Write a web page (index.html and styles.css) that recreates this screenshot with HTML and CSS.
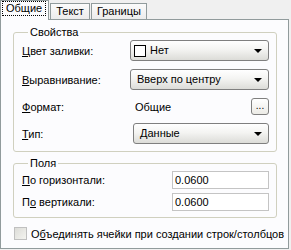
FILE: index.html
```html
<html>
  <head>
    <title>Свойства ячейки</title>
    <link rel="stylesheet" href="styles.css">
  </head>
  <body>
    <div class="tabs">
      <div class="tab active"><span class="focus">Общие</span></div>
      <div class="tab">Текст</div>
      <div class="tab">Границы</div>
    </div>

    <div class="page">
      <fieldset class="group props">
        <legend>Свойства</legend>
        <div class="rows">
          <label><u>Ц</u>вет заливки:</label>
          <div class="combo"><span class="swatch"></span>Нет<span class="arrow"></span></div>

          <label><u>В</u>ыравнивание:</label>
          <div class="combo">Вверх по центру<span class="arrow"></span></div>

          <label><u>Ф</u>ормат:</label>
          <div class="format"><span class="value">Общие</span><span class="btn">...</span></div>

          <label><u>Т</u>ип:</label>
          <div class="combo shifted">Данные<span class="arrow"></span></div>
        </div>
      </fieldset>

      <fieldset class="group fields">
        <legend>Поля</legend>
        <div class="rows">
          <label><u>П</u>о горизонтали:</label>
          <div class="edit">0.0600</div>
          <label>П<u>о</u> вертикали:</label>
          <div class="edit">0.0600</div>
        </div>
      </fieldset>

      <div class="check">
        <span class="box"></span>
        <span>О<u>б</u>ъединять ячейки при создании строк/столбцов</span>
      </div>
    </div>
  </body>
</html>
```

FILE: styles.css
```css
body {
  margin: 0;
  background: #f0f0f0;
  font-family: Tahoma, "Liberation Sans", sans-serif;
  font-size: 11px;
  color: #000;
  width: 291px;
  height: 250px;
  overflow: hidden;
}

.tabs {
  display: flex;
  align-items: flex-end;
  height: 19px;
  position: relative;
  z-index: 1;
}
.tab {
  height: 16px;
  line-height: 15px;
  padding: 0 5px;
  border: 1px solid #919b9c;
  border-bottom: none;
  background: linear-gradient(#fbfbfb, #ececec);
  box-sizing: border-box;
}
.tab + .tab { margin-left: 1px; }
.tab.active {
  height: 20px;
  margin-bottom: -1px;
  background: #fcfcfe;
  padding: 0 2px 0 1px;
  line-height: 17px;
}
.focus {
  display: inline-block;
  border: 1px dotted #000;
  padding: 0 3px;
  line-height: 13px;
}

.page {
  width: 289px;
  height: 230px;
  box-sizing: border-box;
  border: 1px solid #919b9c;
  background: #fcfcfe;
  padding: 6px 0 0 12px;
}

.group {
  width: 264px;
  box-sizing: border-box;
  margin: 0;
  border: 1px solid #d0d0bf;
  border-radius: 3px;
  padding: 1px 0 0 8px;
}
.group legend {
  margin-left: 6px;
  padding: 0 2px;
  line-height: 13px;
}
.props { height: 126px; }
.fields { height: 61px; margin-top: 5px; }

.rows {
  display: grid;
  grid-template-columns: 108px 139px;
  row-gap: 8px;
  align-items: center;
}
.fields .rows {
  grid-template-columns: 150px 97px;
  row-gap: 4px;
}
u { text-decoration: underline; }

.combo {
  position: relative;
  height: 21px;
  box-sizing: border-box;
  border: 1px solid #7f7f7f;
  border-radius: 3px;
  background: linear-gradient(#ffffff, #f4f4f2 45%, #dcdcd8);
  padding-left: 6px;
  line-height: 19px;
  display: flex;
  align-items: center;
}
.combo.shifted {
  margin-left: 3px;
  width: 136px;
}
.arrow {
  position: absolute;
  right: 6px;
  top: 8px;
  border-left: 4px solid transparent;
  border-right: 4px solid transparent;
  border-top: 4px solid #000;
}
.swatch {
  width: 10px;
  height: 10px;
  border: 1px solid #000;
  background: #fff;
  margin: 0 4px 0 -3px;
}

.format {
  display: flex;
  align-items: center;
  height: 17px;
  padding-left: 5px;
}
.value { flex: 1; }
.btn {
  width: 18px;
  height: 17px;
  box-sizing: border-box;
  border: 1px solid #7f7f7f;
  border-radius: 3px;
  background: linear-gradient(#ffffff, #ecebe6);
  text-align: center;
  line-height: 13px;
  font-size: 10px;
}

.edit {
  height: 18px;
  box-sizing: border-box;
  border: 1px solid #c4c4c4;
  background: #fff;
  padding-left: 2px;
  line-height: 16px;
}

.check {
  display: flex;
  align-items: center;
  margin-top: 9px;
  margin-left: 1px;
}
.box {
  width: 13px;
  height: 13px;
  box-sizing: border-box;
  border: 1px solid #c0c0c0;
  background: linear-gradient(135deg, #dcdcd8, #f4f4f0);
  margin-right: 4px;
}
```
